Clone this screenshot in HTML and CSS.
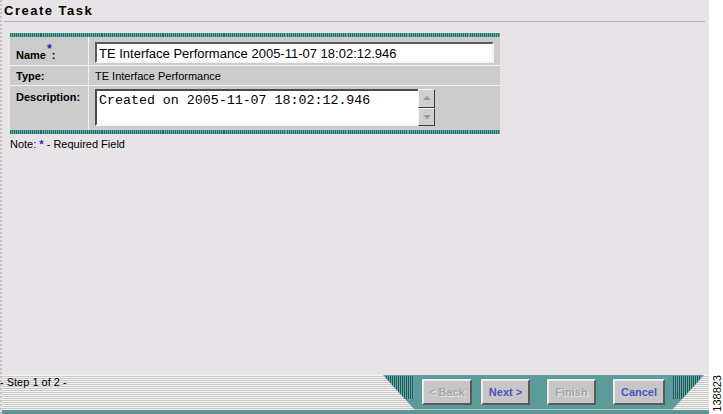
FILE: index.html
```html
<!DOCTYPE html>
<html lang="en">
<head>
  <meta charset="UTF-8" />
  <title>Create Task</title>
  <link rel="stylesheet" href="styles.css">
</head>
<body>
  <div class="page">
    <div class="main">
      <h1 class="title">Create Task</h1>

      <div class="content">
        <div class="form-box">
          <table class="form-table">
            <tr class="row-name">
              <th>Name<sup class="req">*</sup>:</th>
              <td><input type="text" class="name-input" value="TE Interface Performance 2005-11-07 18:02:12.946" /></td>
            </tr>
            <tr class="row-type">
              <th>Type:</th>
              <td class="type-value">TE Interface Performance</td>
            </tr>
            <tr class="row-desc">
              <th>Description:</th>
              <td>
                <div class="desc-box">
                  <textarea class="desc-input">Created on 2005-11-07 18:02:12.946</textarea>
                  <div class="scroll">
                    <span class="scroll-btn up"></span>
                    <span class="scroll-btn down"></span>
                  </div>
                </div>
              </td>
            </tr>
          </table>
        </div>
        <p class="note">Note: <span class="req">*</span> - Required Field</p>
      </div>

      <div class="footer">
        <span class="step">- Step 1 of 2 -</span>
        <div class="nav">
          <button class="nav-btn btn-back" disabled>&lt; Back</button>
          <button class="nav-btn btn-next">Next &gt;</button>
          <button class="nav-btn btn-finish" disabled>Finish</button>
          <button class="nav-btn btn-cancel">Cancel</button>
        </div>
      </div>
    </div>

    <div class="side"><span class="side-id">138823</span></div>
  </div>
</body>
</html>
```

FILE: styles.css
```css
* {
  box-sizing: border-box;
}

body {
  margin: 0;
  font-family: "Liberation Sans", Arial, sans-serif;
  font-size: 11px;
  color: #000;
  background: #fff;
}

.page {
  display: flex;
  width: 723px;
  height: 414px;
}

.main {
  flex: 1;
  display: flex;
  flex-direction: column;
  background: #e7e3e7;
  border-left: 2px dotted #c4c0c4;
}

.title {
  margin: 0 4px 0 2px;
  height: 22px;
  padding-top: 3px;
  font-size: 13px;
  line-height: 16px;
  letter-spacing: 1.5px;
  font-weight: bold;
  border-bottom: 1px solid #b4b0b4;
}

.content {
  padding: 11px 0 0 8px;
}

.form-box {
  width: 490px;
  border-top: 4px solid transparent;
  border-bottom: 4px solid transparent;
  border-image: repeating-linear-gradient(90deg, #236f6c 0 1px, #6aa8a5 1px 2px) 4;
  background: #cccccc;
}

.form-table {
  width: 100%;
  border-collapse: separate;
  border-spacing: 0;
}

.form-table th {
  width: 79px;
  text-align: left;
  font-weight: bold;
  padding: 0 0 0 6px;
  border-right: 1px solid #f2f2f2;
}

.form-table tr + tr th,
.form-table tr + tr td {
  border-top: 1px solid #f2f2f2;
}

.form-table td {
  padding: 0 0 0 6px;
}

.row-name th,
.row-name td {
  height: 28px;
  padding-top: 5px;
  padding-bottom: 2px;
}

.row-name th {
  padding-top: 4px;
}

.req {
  color: #1f1fc8;
  font-weight: bold;
}

.row-name .req {
  font-size: 12px;
  position: relative;
  top: -1px;
  margin-left: 1px;
}

.name-input {
  display: block;
  width: 399px;
  height: 21px;
  margin: 0;
  padding: 1px 2px 0;
  font-family: "Liberation Sans", Arial, sans-serif;
  font-size: 13px;
  background: #fff;
  border: 2px solid;
  border-color: #5a5a5a #f4f4f4 #f4f4f4 #5a5a5a;
}

.row-type th,
.row-type td {
  height: 20px;
}

.row-desc th,
.row-desc td {
  height: 45px;
  vertical-align: top;
}

.row-desc th {
  padding-top: 5px;
}

.row-desc td {
  padding-top: 3px;
}

.desc-box {
  display: flex;
  width: 340px;
  height: 37px;
}

.desc-input {
  flex: 1;
  margin: 0;
  padding: 2px 2px;
  font-family: "Liberation Mono", "Courier New", monospace;
  font-size: 13.3px;
  line-height: 15px;
  resize: none;
  overflow: hidden;
  background: #fff;
  border: 2px solid;
  border-right: 0;
  border-color: #4a4a4a #f4f4f4 #f4f4f4 #4a4a4a;
}

.scroll {
  width: 17px;
  display: flex;
  flex-direction: column;
  background: #ececec;
}

.scroll-btn {
  flex: 1;
  display: flex;
  align-items: center;
  justify-content: center;
  background: #cfcfcf;
  border: 1px solid;
  border-color: #f6f6f6 #3c3c3c #3c3c3c #f6f6f6;
}

.scroll-btn::before {
  content: "";
  border-left: 4px solid transparent;
  border-right: 4px solid transparent;
}

.scroll-btn.up::before {
  border-bottom: 4px solid #9a9a9a;
}

.scroll-btn.down::before {
  border-top: 4px solid #9a9a9a;
}

.note {
  margin: 4px 0 0;
  line-height: 13px;
}

.footer {
  margin-top: auto;
  height: 39px;
  display: flex;
  justify-content: space-between;
  align-items: flex-start;
  background: repeating-linear-gradient(180deg, #f2f2f2 0 1px, #c9c9c9 1px 2px);
  border-bottom: 4px solid #5f9595;
}

.step {
  margin-left: -2px;
  padding-top: 1px;
  line-height: 13px;
  font-size: 11px;
}

.nav {
  position: relative;
  width: 321px;
  height: 35px;
  margin-right: 5px;
  display: flex;
  gap: 9px;
  padding: 4px 0 0 39px;
  background: #5d9b9a;
  border-bottom: 1px solid #a6cfcd;
  clip-path: polygon(0 0, 100% 0, calc(100% - 32px) 100%, 32px 100%);
}

.nav::before,
.nav::after {
  content: "";
  position: absolute;
  top: 1px;
  width: 28px;
  height: 23px;
  background: repeating-linear-gradient(90deg, #1d5b5a 0 1px, #6aa6a4 1px 2px);
}

.nav::before {
  left: 3px;
}

.nav::after {
  right: 3px;
}

.nav-btn {
  height: 26px;
  margin: 0;
  padding: 0;
  font-family: "Liberation Sans", Arial, sans-serif;
  font-size: 11px;
  font-weight: bold;
  color: #5050c8;
  background: #c6c6c6;
  border: 2px solid;
  border-color: #ececec #5a5a5a #5a5a5a #ececec;
}

.nav-btn:disabled {
  color: #a6a6a6;
  text-shadow: 1px 1px 0 #e8e8e8;
}

.btn-back {
  width: 50px;
}

.btn-next {
  width: 49px;
}

.btn-finish {
  width: 49px;
  margin-left: 8px;
}

.btn-cancel {
  width: 52px;
  margin-left: 8px;
}

.side {
  width: 14px;
  display: flex;
  align-items: flex-end;
  justify-content: center;
  background: #fff;
  padding: 0 0 2px 2px;
}

.side-id {
  writing-mode: vertical-rl;
  transform: rotate(180deg);
  font-size: 11px;
  line-height: 12px;
}
```
